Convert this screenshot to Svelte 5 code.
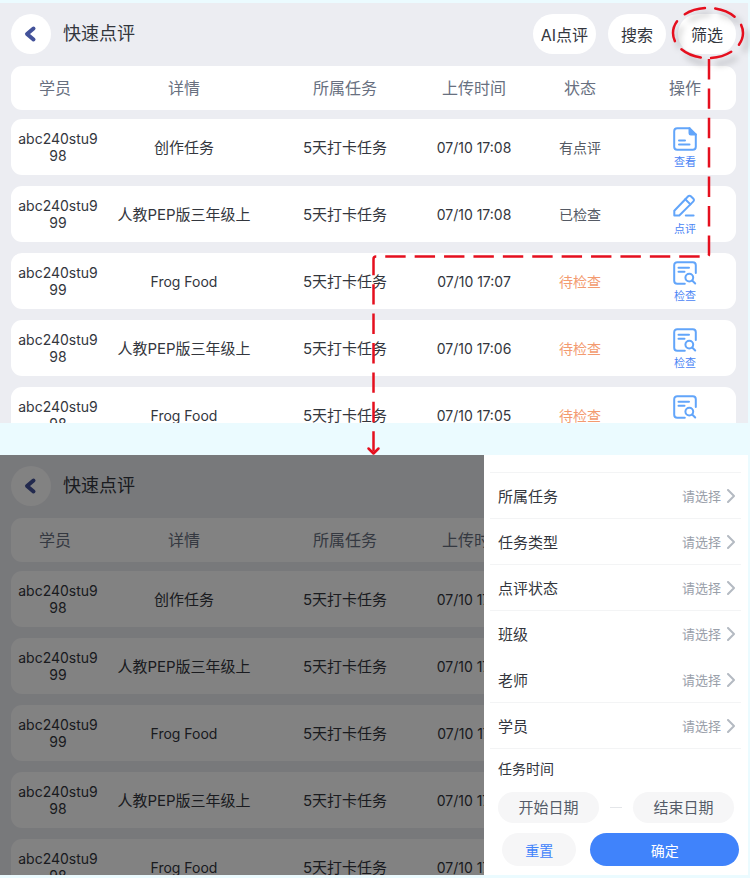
<script>
	const columns = ["学员", "详情", "所属任务", "上传时间", "状态", "操作"]

	const rows = [
		{ student: "abc240stu998", detail: "创作任务", time: "07/10 17:08", status: "有点评", action: "查看", icon: "view" },
		{ student: "abc240stu999", detail: "人教PEP版三年级上", time: "07/10 17:08", status: "已检查", action: "点评", icon: "edit" },
		{ student: "abc240stu999", detail: "Frog Food", time: "07/10 17:07", status: "待检查", action: "检查", icon: "check" },
		{ student: "abc240stu998", detail: "人教PEP版三年级上", time: "07/10 17:06", status: "待检查", action: "检查", icon: "check" },
		{ student: "abc240stu998", detail: "Frog Food", time: "07/10 17:05", status: "待检查", action: "检查", icon: "check" },
	]

	const filters = [
		{ id: "task", label: "所属任务" },
		{ id: "type", label: "任务类型" },
		{ id: "status", label: "点评状态" },
		{ id: "class", label: "班级", plain: true },
		{ id: "teacher", label: "老师" },
		{ id: "student", label: "学员" },
	]

	const isLatin = (text) => /^[\w\s]+$/.test(text)
</script>

{#snippet actionIcon(name)}
	<svg class="action-icon" viewBox="0 0 24 24" aria-hidden="true">
		{#if name === "view"}
			<path d="M16.5 1.2H4.2a3 3 0 0 0-3 3v15.6a3 3 0 0 0 3 3h15.6a3 3 0 0 0 3-3V7.5" />
			<path class="solid" d="M16.5 1.2 22.8 7.5h-5a1.3 1.3 0 0 1-1.3-1.3z" />
			<path d="M6 13.5h6M6 17.5h10.5" />
		{:else if name === "edit"}
			<path d="M1.3 21.5v-4.8L15.2 2.2a1.8 1.8 0 0 1 2.6 0l2.6 2.6a1.8 1.8 0 0 1 0 2.6L6.3 21.5z" />
			<path d="M12.3 5.2l5.1 5.2M12.8 21.5h7.8" />
		{:else}
			<path d="M22.8 12V4.2a3 3 0 0 0-3-3H4.2a3 3 0 0 0-3 3v15.6a3 3 0 0 0 3 3h7.6" />
			<path d="M5.5 6.7h10.5M5.5 10.7h6" />
			<circle cx="16.3" cy="16.6" r="3.9" />
			<path d="M19.2 19.5l3 3" />
		{/if}
	</svg>
{/snippet}

{#snippet reviewList()}
	<header class="topbar">
		<button class="back" aria-label="返回">
			<svg viewBox="0 0 20 20" aria-hidden="true">
				<path d="M12.5 4.500 6 10l6.500 5.500" />
			</svg>
		</button>
		<h1>快速点评</h1>
		<div class="tools">
			<button>AI点评</button>
			<button>搜索</button>
			<button>筛选</button>
		</div>
	</header>
	<table>
		<thead>
			<tr>
				{#each columns as column}
					<th scope="col">{column}</th>
				{/each}
			</tr>
		</thead>
		<tbody>
			{#each rows as row}
				<tr>
					<td class="student latin">{row.student}</td>
					<td class:latin={isLatin(row.detail)}>{row.detail}</td>
					<td>5天打卡任务</td>
					<td class="latin">{row.time}</td>
					<td class="status" class:pending={row.icon === "check"}>{row.status}</td>
					<td>
						<button class="action">
							{@render actionIcon(row.icon)}
							<span>{row.action}</span>
						</button>
					</td>
				</tr>
			{/each}
		</tbody>
	</table>
{/snippet}

<main>
	<section class="screen">
		{@render reviewList()}
	</section>

	<section class="screen">
		<div inert>
			{@render reviewList()}
		</div>
		<div class="backdrop"></div>
		<form class="drawer" on:submit|preventDefault>
			<div class="fields">
				{#each filters as filter}
					<div class="field" class:plain={filter.plain}>
						<label for={filter.id}>{filter.label}</label>
						<select id={filter.id}>
							<option>请选择</option>
						</select>
						<svg class="chevron" viewBox="0 0 8 14" aria-hidden="true">
							<path d="M1 1l6 6-6 6" />
						</svg>
					</div>
				{/each}
			</div>
			<fieldset>
				<legend>任务时间</legend>
				<div class="dates">
					<input type="text" aria-label="开始日期" placeholder="开始日期" />
					<span class="dash"></span>
					<input type="text" aria-label="结束日期" placeholder="结束日期" />
				</div>
			</fieldset>
			<div class="buttons">
				<button type="reset">重置</button>
				<button type="submit">确定</button>
			</div>
		</form>
	</section>

	<!-- route from the filter button down to the opened drawer -->
	<svg class="route" width="750" height="460" viewBox="0 0 750 460" aria-hidden="true">
		<ellipse cx="708" cy="33" rx="35" ry="25" pathLength="180" />
		<path class="line" d="M709 59V254q0 2.500-2.500 2.500H376q-2.500 0-2.500 2.500V453" />
		<path d="M368.500 448.500l5 5 5-5" />
	</svg>
</main>

<style>
	:global(body) {
		margin: 0;
		background: #ebfbff;
	}

	main {
		position: relative;
		display: flex;
		flex-direction: column;
		gap: 32px;
		padding: 3px 2px 3px 0;
		font-family: Inter, "Noto Sans CJK SC", sans-serif;
		font-size: 15px;
		color: #33363d;
	}

	button,
	input,
	select {
		font: inherit;
		color: inherit;
		border: none;
		margin: 0;
		padding: 0;
		background: none;
	}

	button {
		cursor: pointer;
	}

	.screen {
		position: relative;
		height: 420px;
		overflow: hidden;
		background: #ecedf2;
	}

	.topbar {
		display: flex;
		align-items: center;
		padding: 11px 12px 12px 11px;
	}

	.back {
		display: flex;
		align-items: center;
		justify-content: center;
		width: 40px;
		height: 40px;
		border-radius: 50%;
		background: #fff;
	}

	.back svg {
		width: 20px;
		height: 20px;
		fill: none;
		stroke: #43529a;
		stroke-width: 4;
		stroke-linecap: round;
		stroke-linejoin: round;
	}

	h1 {
		margin: 0 0 0 12px;
		font-size: 18px;
		font-weight: 400;
		line-height: 24px;
	}

	.tools {
		display: flex;
		gap: 12px;
		margin-left: auto;
	}

	.tools button {
		min-width: 58px;
		height: 40px;
		padding: 0 8px;
		border-radius: 20px;
		background: #fff;
		font-size: 16px;
	}

	table {
		display: block;
		padding: 0 12px 0 11px;
	}

	thead {
		display: block;
		margin-bottom: 9px;
	}

	tbody {
		display: flex;
		flex-direction: column;
		gap: 11px;
	}

	tr {
		display: grid;
		grid-template-columns: 94fr 158fr 164fr 94fr 118fr 92fr;
		align-items: center;
		height: 56px;
		padding-right: 5px;
		border-radius: 11px;
		background: #fff;
	}

	thead tr {
		height: 44px;
	}

	th,
	td {
		padding: 0;
		text-align: center;
		line-height: 17px;
		white-space: nowrap;
	}

	th {
		font-size: 16px;
		font-weight: 400;
		color: #687080;
	}

	th:first-child {
		padding-right: 6px;
	}

	.latin {
		font-size: 14px;
	}

	.student {
		padding: 0 6px;
		white-space: normal;
		word-break: break-all;
	}

	.status {
		font-size: 14px;
		color: #555a64;
	}

	.pending {
		color: #f39b70;
	}

	.action {
		display: inline-flex;
		flex-direction: column;
		align-items: center;
		gap: 3px;
		padding-top: 2px;
		font-size: 11px;
		line-height: 16px;
		color: #4a84f5;
		vertical-align: middle;
	}

	.action-icon {
		width: 24px;
		height: 24px;
		fill: none;
		stroke: #62a5fa;
		stroke-width: 2;
		stroke-linecap: round;
		stroke-linejoin: round;
	}

	.solid {
		fill: #62a5fa;
	}

	.backdrop {
		position: absolute;
		inset: 0;
		background: rgba(0, 0, 0, 0.49);
	}

	.drawer {
		position: absolute;
		top: 0;
		right: 0;
		bottom: 0;
		display: flex;
		flex-direction: column;
		box-sizing: border-box;
		width: 264px;
		padding: 17px 7px 9px 6px;
		background: #fff;
	}

	.fields {
		border-top: 1px solid #f3f4f5;
	}

	.field {
		position: relative;
		display: flex;
		align-items: center;
		box-sizing: border-box;
		height: 46px;
		padding: 0 6px 0 8px;
		border-bottom: 1px solid #f3f4f5;
	}

	.field.plain {
		border-bottom-color: transparent;
	}

	.field select {
		flex: 1;
		appearance: none;
		height: 45px;
		padding-right: 6px;
		font-size: 13px;
		text-align-last: right;
		color: #9aa0aa;
	}

	.chevron {
		width: 8px;
		height: 14px;
		fill: none;
		stroke: #b4bac2;
		stroke-width: 2;
		stroke-linecap: round;
		stroke-linejoin: round;
	}

	fieldset {
		margin: 0;
		padding: 0 7px 0 8px;
		border: none;
	}

	legend {
		padding: 10px 0 13px;
		font-size: 14px;
		line-height: 20px;
	}

	.dates {
		display: flex;
		align-items: center;
		justify-content: space-between;
	}

	.dates input {
		width: 101px;
		height: 31px;
		border-radius: 16px;
		background: #f6f6f7;
		text-align: center;
	}

	.dates input::placeholder {
		color: #555c69;
		opacity: 1;
	}

	.dash {
		width: 12px;
		height: 1px;
		background: #e4e6e9;
	}

	.buttons {
		display: flex;
		gap: 14px;
		margin-top: auto;
		padding: 0 2px 0 12px;
	}

	.buttons button {
		flex: 1;
		height: 33px;
		border-radius: 17px;
		background: #f6f6f7;
		font-size: 14px;
		color: #4083fb;
	}

	.buttons button[type="submit"] {
		flex: 2;
		background: #4083fb;
		color: #fff;
	}

	.route {
		position: absolute;
		top: 0;
		right: 0;
		fill: none;
		stroke: #e50f1e;
		stroke-width: 2.5;
		stroke-linecap: round;
		stroke-linejoin: round;
		pointer-events: none;
	}

	.route ellipse {
		stroke-dasharray: 20 10;
		stroke-dashoffset: 8;
		filter: drop-shadow(5px 6px 3px rgba(0, 0, 0, 0.3));
	}

	.route .line {
		stroke-dasharray: 20.4 9;
		stroke-linecap: butt;
	}
</style>
